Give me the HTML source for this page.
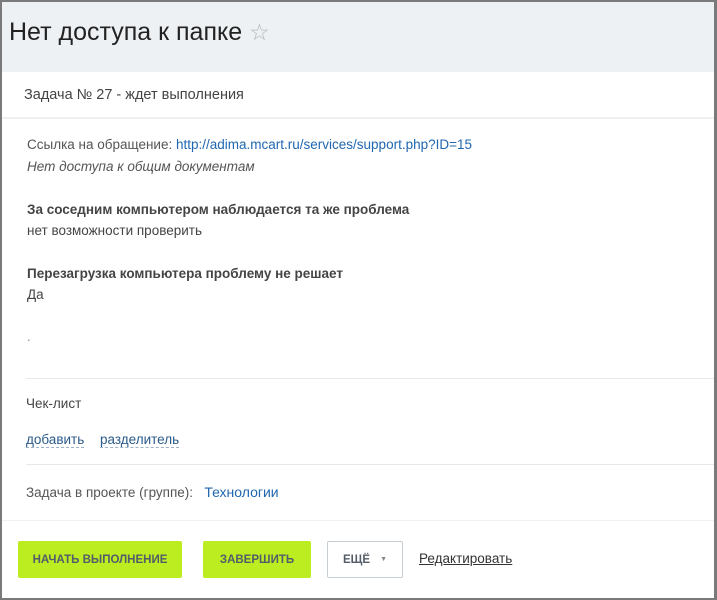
<!DOCTYPE html>
<html><head><meta charset="utf-8"><style>
*{margin:0;padding:0;box-sizing:border-box}
body{width:717px;height:600px;overflow:hidden;background:#fff;font-family:"Liberation Sans",sans-serif;position:relative;color:#333}
.frame{position:absolute;left:0;top:0;width:717px;height:600px;border:2px solid #7a7a7a;border-right-width:3px}
.hdr{position:absolute;left:2px;top:2px;width:712px;height:70px;background:#edf1f4}
.t{position:absolute;white-space:nowrap}
.line{position:absolute;height:1px;background:#e6e8e9}
a{color:#2067b0;text-decoration:none}
.dash{color:#2a5a8a;border-bottom:1px dashed #9fb3c8}
.btn{position:absolute;top:541px;height:37px;font-weight:bold;font-size:11.5px;color:#535c69;display:flex;align-items:center;justify-content:center;border-radius:2px}
.g{background:#bbed21}
</style></head><body>
<div class="hdr"></div>
<div class="t" style="left:9px;top:18px;font-size:25px;color:#222">Нет доступа к папке <span style="color:#b0b6bb;font-size:23px">☆</span></div>
<div class="t" style="left:24px;top:87px;font-size:14.5px;color:#444">Задача № 27 - ждет выполнения</div>
<div class="line" style="left:2px;top:117px;width:712px;height:2px;background:#eef0f1"></div>
<div class="t" style="left:27px;top:137px;font-size:13.5px;color:#555">Ссылка на обращение: <a>http://adima.mcart.ru/services/support.php?ID=15</a></div>
<div class="t" style="left:27px;top:159px;font-size:13.5px;color:#555;font-style:italic">Нет доступа к общим документам</div>
<div class="t" style="left:27px;top:202px;font-size:13.5px;color:#444;font-weight:bold">За соседним компьютером наблюдается та же проблема</div>
<div class="t" style="left:27px;top:223px;font-size:13.5px;color:#444">нет возможности проверить</div>
<div class="t" style="left:27px;top:266px;font-size:13.5px;color:#444;font-weight:bold">Перезагрузка компьютера проблему не решает</div>
<div class="t" style="left:27px;top:287px;font-size:13.5px;color:#444">Да</div>
<div class="t" style="left:27px;top:329px;font-size:13px;color:#888">.</div>
<div class="line" style="left:26px;top:378px;width:688px"></div>
<div class="t" style="left:26px;top:396px;font-size:13.5px;color:#444">Чек-лист</div>
<div class="t" style="left:26px;top:432px;font-size:13.5px"><span class="dash">добавить</span></div>
<div class="t" style="left:100px;top:432px;font-size:13.5px"><span class="dash">разделитель</span></div>
<div class="line" style="left:26px;top:464px;width:688px"></div>
<div class="t" style="left:26px;top:484px;font-size:13.5px;color:#555">Задача в проекте (группе): &nbsp;&nbsp;<a style="font-size:14px">Технологии</a></div>
<div class="line" style="left:2px;top:520px;width:712px;background:#eef0f1"></div>
<div class="btn g" style="left:18px;width:164px">НАЧАТЬ ВЫПОЛНЕНИЕ</div>
<div class="btn g" style="left:203px;width:108px">ЗАВЕРШИТЬ</div>
<div class="btn" style="left:327px;width:76px;border:1px solid #c6cdd3;background:#fff">ЕЩЁ <span style="margin-left:10px;font-size:7px;color:#888">▼</span></div>
<div class="t" style="left:419px;top:551px;font-size:13.5px;color:#333;text-decoration:underline">Редактировать</div>
<div class="frame"></div>
</body></html>
